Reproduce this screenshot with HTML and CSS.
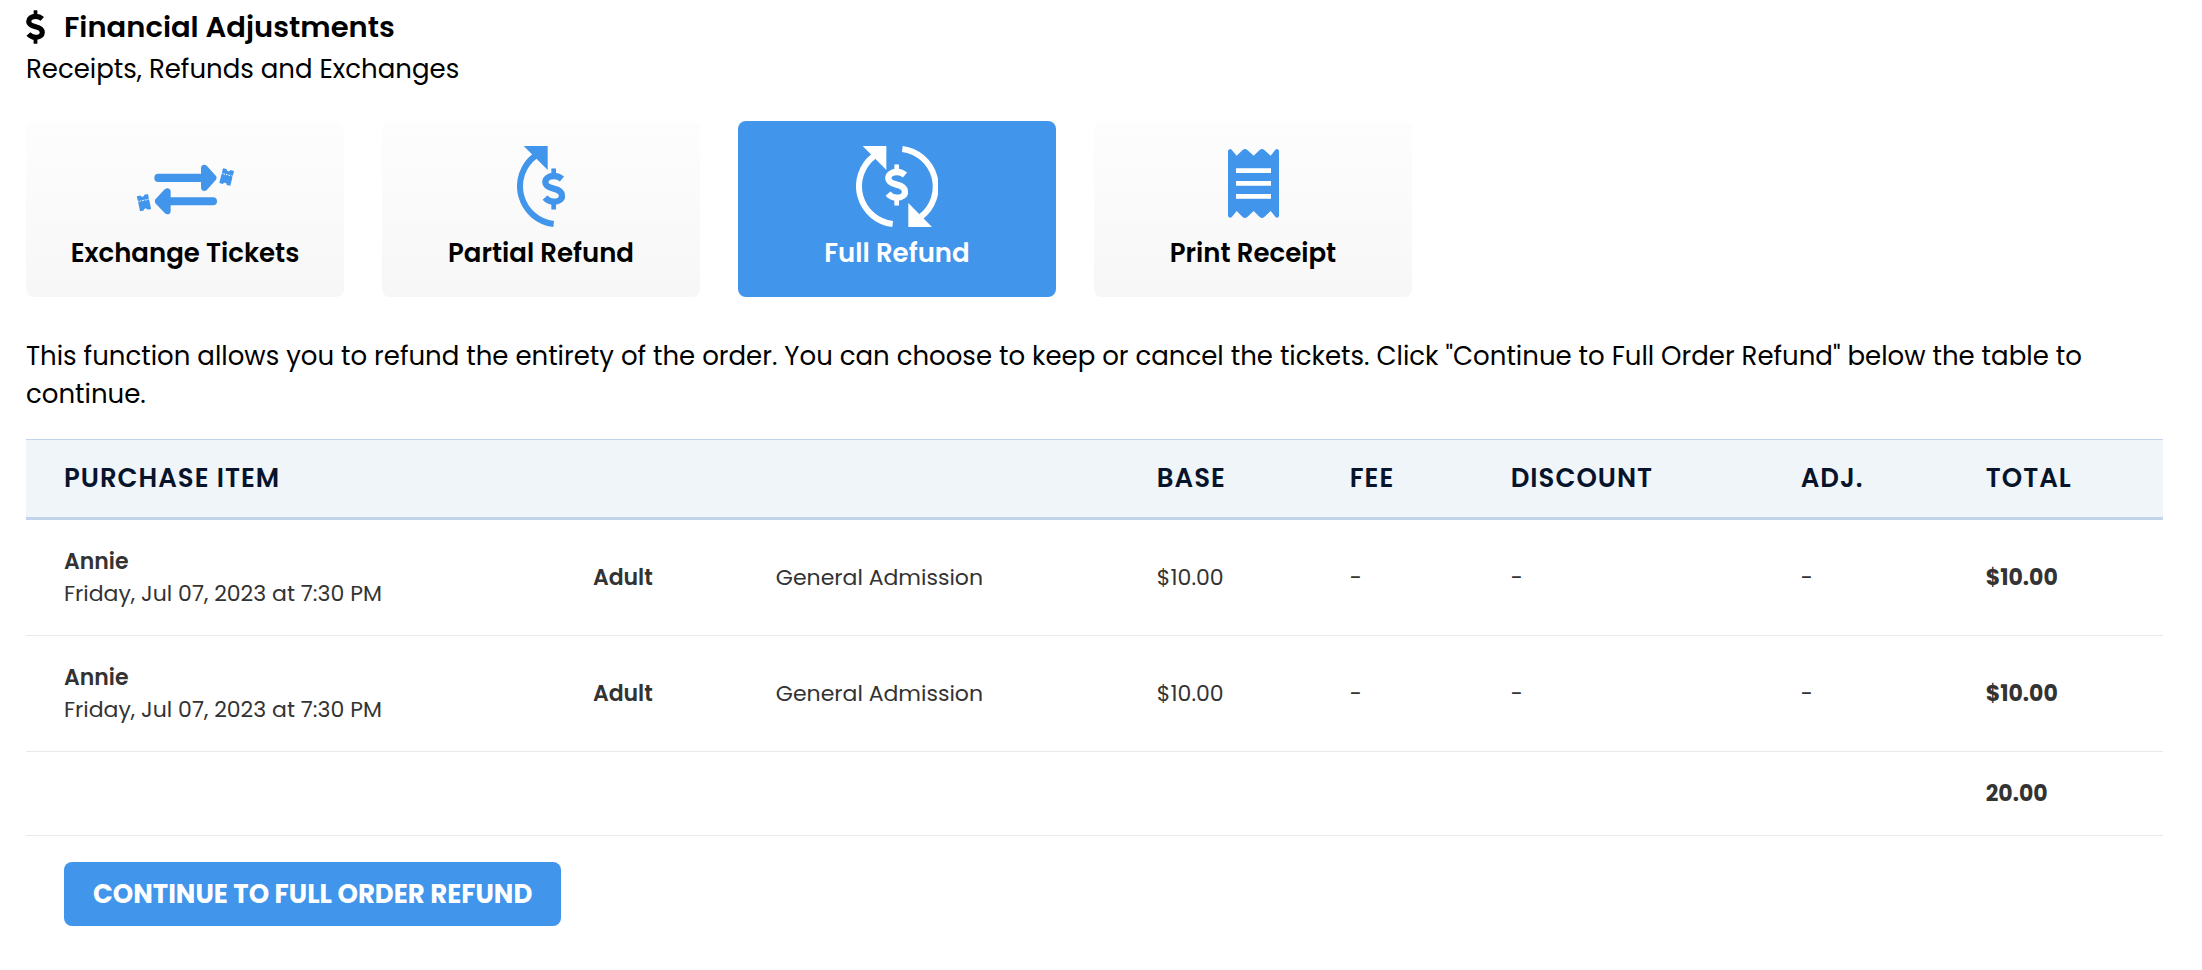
FILE: index.html
```html
<!DOCTYPE html>
<html lang="en">

<head>
    <meta charset="utf-8"/>
    <meta name="viewport" content="width=device-width, initial-scale=1"/>
    <title>Financial Adjustments</title>

    <link rel="stylesheet" href="styles.css">
</head>

<body>
<!-- shared icon parts -->
<svg class="sprite" aria-hidden="true">
    <symbol id="dollar" viewBox="0 0 70 124">
        <path d="M60 32C52 25 44 23 36 23C20 23 10 31 10 42C10 52 18 57 35 61C52 65 60 71 60 82C60 93 50 100 35 100C24 100 16 96 9 88" fill="none" stroke="currentColor" stroke-width="19"/>
        <rect x="28" y="0" width="14" height="24" rx="2" fill="currentColor"/>
        <rect x="28" y="99" width="14" height="25" rx="2" fill="currentColor"/>
    </symbol>
    <g id="ticket">
        <path d="M-17 -23H-6Q-5 -18 0 -18Q5 -18 6 -23H17V-10Q15 -9 15 -7Q15 -5 17 -4V23H6Q5 18 0 18Q-5 18 -6 23H-17V-4Q-15 -5 -15 -7Q-15 -9 -17 -10Z"/>
        <path class="perforation" d="M-12 -7H14"/>
    </g>
</svg>

<main class="page">
    <header>
        <h1 class="title">
            <svg class="title-icon" aria-hidden="true"><use href="#dollar"/></svg>
            Financial Adjustments
        </h1>
        <p class="subtitle">Receipts, Refunds and Exchanges</p>
    </header>

    <nav class="cards">
        <button type="button" class="card">
            <svg width="99" height="81" viewBox="76 48 297 243" fill="currentColor" aria-hidden="true">
                <rect x="131" y="131" width="150" height="25" rx="12"/>
                <path d="M271 115Q271 104 281 104Q287 104 291 110L316 138Q320 143 316 149L291 177Q287 183 281 183Q271 183 271 172Z"/>
                <rect x="168" y="202" width="151" height="24" rx="12"/>
                <path d="M180 186Q180 175 170 175Q164 175 160 180L134 208Q130 214 134 220L160 247Q164 253 170 253Q180 253 180 242Z"/>
                <use href="#ticket" transform="translate(348 141) rotate(14)"/>
                <use href="#ticket" transform="translate(100 218) rotate(-12)"/>
            </svg>
            <span>Exchange Tickets</span>
        </button>
        <button type="button" class="card">
            <svg width="49" height="81" viewBox="80 48 147 243" aria-hidden="true">
                <path d="M190 282A114 114 0 0 1 134 78" fill="none" stroke="currentColor" stroke-width="18"/>
                <path d="M100 48H172V120Z" fill="currentColor"/>
                <use href="#dollar" x="155" y="115" width="70" height="124"/>
            </svg>
            <span>Partial Refund</span>
        </button>
        <button type="button" class="card active" aria-pressed="true">
            <svg width="82" height="81" viewBox="77 48 246 243" aria-hidden="true">
                <path d="M187 282A114 114 0 0 1 131 78M216 57A114 114 0 0 1 271 261" fill="none" stroke="currentColor" stroke-width="18"/>
                <path d="M97 48H168V120ZM234 219L305 291H234Z" fill="currentColor"/>
                <use href="#dollar" x="164" y="103" width="70" height="124"/>
            </svg>
            <span>Full Refund</span>
        </button>
        <button type="button" class="card">
            <svg width="51" height="81" viewBox="84 48 153 243" aria-hidden="true">
                <path d="M84 62Q90 53 96 61L110 77L128 60Q135 54 142 60L161 77L179 60Q186 54 193 60L212 77L225 61Q232 53 237 62V259Q232 267 226 260L212 243L193 261Q186 267 179 261L161 243L142 261Q135 267 128 261L110 243L96 260Q90 267 84 259Z" fill="currentColor"/>
                <path d="M115 122H206M115 160H206M115 199H206" stroke="#fff" stroke-width="14" stroke-linecap="square"/>
            </svg>
            <span>Print Receipt</span>
        </button>
    </nav>

    <p class="intro">This function allows you to refund the entirety of the order. You can choose to keep or cancel the tickets. Click "Continue to Full Order Refund" below the table to continue.</p>

    <table class="items">
        <colgroup>
            <col class="col-item"/>
            <col class="col-type"/>
            <col class="col-seat"/>
            <col class="col-base"/>
            <col class="col-fee"/>
            <col class="col-discount"/>
            <col class="col-adj"/>
            <col/>
        </colgroup>
        <thead>
        <tr>
            <th colspan="3">Purchase Item</th>
            <th>Base</th>
            <th>Fee</th>
            <th>Discount</th>
            <th>Adj.</th>
            <th>Total</th>
        </tr>
        </thead>
        <tbody>
        <tr>
            <td><b>Annie</b><br/>Friday, Jul 07, 2023 at 7:30 PM</td>
            <td><b>Adult</b></td>
            <td>General Admission</td>
            <td>$10.00</td>
            <td>-</td>
            <td>-</td>
            <td>-</td>
            <td class="total">$10.00</td>
        </tr>
        <tr>
            <td><b>Annie</b><br/>Friday, Jul 07, 2023 at 7:30 PM</td>
            <td><b>Adult</b></td>
            <td>General Admission</td>
            <td>$10.00</td>
            <td>-</td>
            <td>-</td>
            <td>-</td>
            <td class="total">$10.00</td>
        </tr>
        <tr>
            <td colspan="7"></td>
            <td class="total">20.00</td>
        </tr>
        </tbody>
    </table>

    <div class="actions">
        <button type="button" class="continue">Continue to Full Order Refund</button>
    </div>
</main>
</body>
</html>
```
FILE: styles.css
```css
*{
    box-sizing: border-box;
    padding: 0;
    margin: 0;
}

body{
    font-family: Poppins, Inter, "Open Sans", sans-serif;
    font-size: 26px;
    line-height: 38px;
    color: #000;
    background: #fff;
}

button{
    font: inherit;
    border: 0;
    cursor: pointer;
}

.sprite{
    position: absolute;
    width: 0;
    height: 0;
}

.page{
    padding: 8px 39px 40px 26px;
}

.title{
    display: flex;
    align-items: center;
    gap: 19px;
    font-size: 29px;
    font-weight: 600;
}

.title-icon{
    width: 19px;
    height: 34px;
}

.subtitle{
    padding-top: 4px;
}

.cards{
    display: flex;
    gap: 38px;
    margin-top: 33px;
}

.card{
    display: flex;
    flex-direction: column;
    align-items: center;
    gap: 7px;
    width: 318px;
    padding: 25px 0;
    border-radius: 8px;
    background: linear-gradient(#fdfdfd, #f7f7f7);
    color: #4195eb;
    font-weight: 600;
}

.card span{
    color: #000;
}

.card.active{
    background: #4195eb;
    color: #fff;
}

.card.active span{
    color: #fff;
}

.perforation{
    fill: none;
    stroke: #fbfbfb;
    stroke-width: 3;
    stroke-dasharray: 5 3;
}

.intro{
    margin-top: 40px;
}

.items{
    width: 100%;
    margin-top: 26px;
    table-layout: fixed;
    border-collapse: separate;
    border-spacing: 0;
    font-size: 22px;
    line-height: 32px;
    color: #333;
}

.col-item{ width: 24.75%; }
.col-type{ width: 8.56%; }
.col-seat{ width: 17.83%; }
.col-base{ width: 9.03%; }
.col-fee{ width: 7.53%; }
.col-discount{ width: 13.57%; }
.col-adj{ width: 8.66%; }

.items th{
    padding: 19px 0 19px 38px;
    border-top: 1px solid #c3d4ea;
    border-bottom: 3px solid #c3d4ea;
    background: #f0f5fa;
    color: #07142b;
    font-size: 26px;
    line-height: 39px;
    font-weight: 600;
    letter-spacing: 1px;
    text-align: left;
    text-transform: uppercase;
}

.items td{
    padding: 26px 0 25px 38px;
    border-bottom: 1px solid #e9e9e9;
}

.items b{
    font-weight: 600;
}

.items .total{
    font-weight: 700;
}

.actions{
    padding: 26px 38px;
}

.continue{
    padding: 13px 29px;
    border-radius: 8px;
    background: #4195eb;
    color: #fff;
    font-size: 26px;
    font-weight: 700;
    text-transform: uppercase;
}
```
